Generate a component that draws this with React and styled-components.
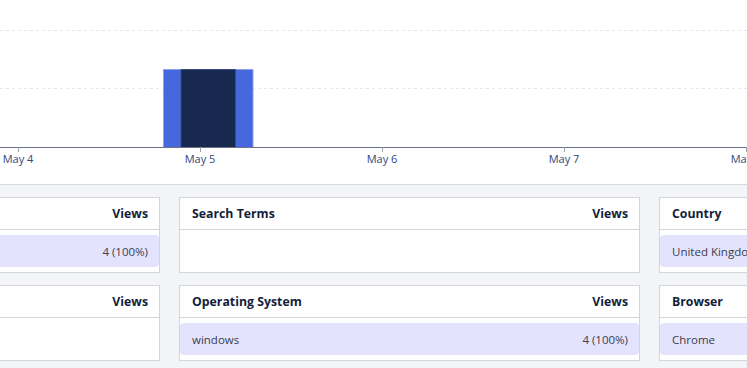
import React from "react";
import styled, { createGlobalStyle } from "styled-components";

const Global = createGlobalStyle`
  html, body { margin: 0; padding: 0; background: #f3f4f8; overflow: hidden; }
  body { font-family: "Open Sans", "Noto Sans", "Liberation Sans", sans-serif; }
`;

const Page = styled.div`
  width: 747px;
  height: 368px;
  overflow: hidden;
  background: #f3f4f8;
`;

const ChartCard = styled.div`
  background: #ffffff;
  border-bottom: 1px solid #d6d8de;
  box-sizing: border-box;
  height: 185px;
`;

const Grid = styled.div`
  display: grid;
  grid-template-columns: repeat(3, 461px);
  column-gap: 19px;
  row-gap: 12px;
  margin-left: -301px;
  padding-top: 12px;
`;

const Panel = styled.section`
  background: #ffffff;
  border: 1px solid #d3d5db;
  display: flex;
  flex-direction: column;
`;

const Head = styled.div`
  height: 31px;
  border-bottom: 1px solid #d3d5db;
  padding: 0 11px 0 12px;
  display: flex;
  align-items: center;
  justify-content: space-between;
  font-size: 12.3px;
  font-weight: 700;
  color: #141d3c;
`;

const Body = styled.div`
  padding: 5px 0 5px;
  min-height: 32px;
`;

const Row = styled.div`
  height: 32px;
  background: #e4e3fd;
  border-radius: 4px;
  padding: 0 11px 0 12px;
  display: flex;
  align-items: center;
  justify-content: space-between;
  font-size: 11.5px;
  color: #3b3d4d;
`;

const panels = [
  { title: "Pages", rows: [["/", "4 (100%)"]] },
  { title: "Search Terms", rows: [] },
  { title: "Country", rows: [["United Kingdom", "4 (100%)"]] },
  { title: "Referrers", rows: [] },
  { title: "Operating System", rows: [["windows", "4 (100%)"]] },
  { title: "Browser", rows: [["Chrome", "4 (100%)"]] },
];

const ticks = [
  { x: 18, label: "May 4" },
  { x: 200, label: "May 5" },
  { x: 382, label: "May 6" },
  { x: 564, label: "May 7" },
  { x: 746, label: "May 8" },
];

function Chart() {
  return (
    <svg width="747" height="184" viewBox="0 0 747 184">
      <line x1="0" x2="747" y1="30.5" y2="30.5" stroke="#e6e7eb" strokeDasharray="3 3" />
      <line x1="0" x2="747" y1="88.5" y2="88.5" stroke="#e6e7eb" strokeDasharray="3 3" />
      <rect x="163.5" y="69.5" width="89.5" height="78" fill="#4767df" stroke="#8ea0ee" strokeWidth="1" />
      <rect x="181" y="69.5" width="54.5" height="78" fill="#182950" stroke="#3a4c80" strokeWidth="1" />
      <line x1="0" x2="747" y1="147.5" y2="147.5" stroke="#6c7285" strokeWidth="1" />
      {ticks.map((t) => (
        <g key={t.label}>
          <line x1={t.x + 0.5} x2={t.x + 0.5} y1="147" y2="152" stroke="#9aa0b0" />
          <text
            x={t.x}
            y="163"
            textAnchor="middle"
            fontSize="11"
            fontFamily='"Open Sans", "Noto Sans", sans-serif'
            fill="#34467a"
          >
            {t.label}
          </text>
        </g>
      ))}
    </svg>
  );
}

export default function App() {
  return (
    <Page>
      <Global />
      <ChartCard>
        <Chart />
      </ChartCard>
      <Grid>
        {panels.map((p) => (
          <Panel key={p.title}>
            <Head>
              <span>{p.title}</span>
              <span>Views</span>
            </Head>
            <Body>
              {p.rows.map(([k, v]) => (
                <Row key={k}>
                  <span>{k}</span>
                  <span>{v}</span>
                </Row>
              ))}
            </Body>
          </Panel>
        ))}
      </Grid>
    </Page>
  );
}
